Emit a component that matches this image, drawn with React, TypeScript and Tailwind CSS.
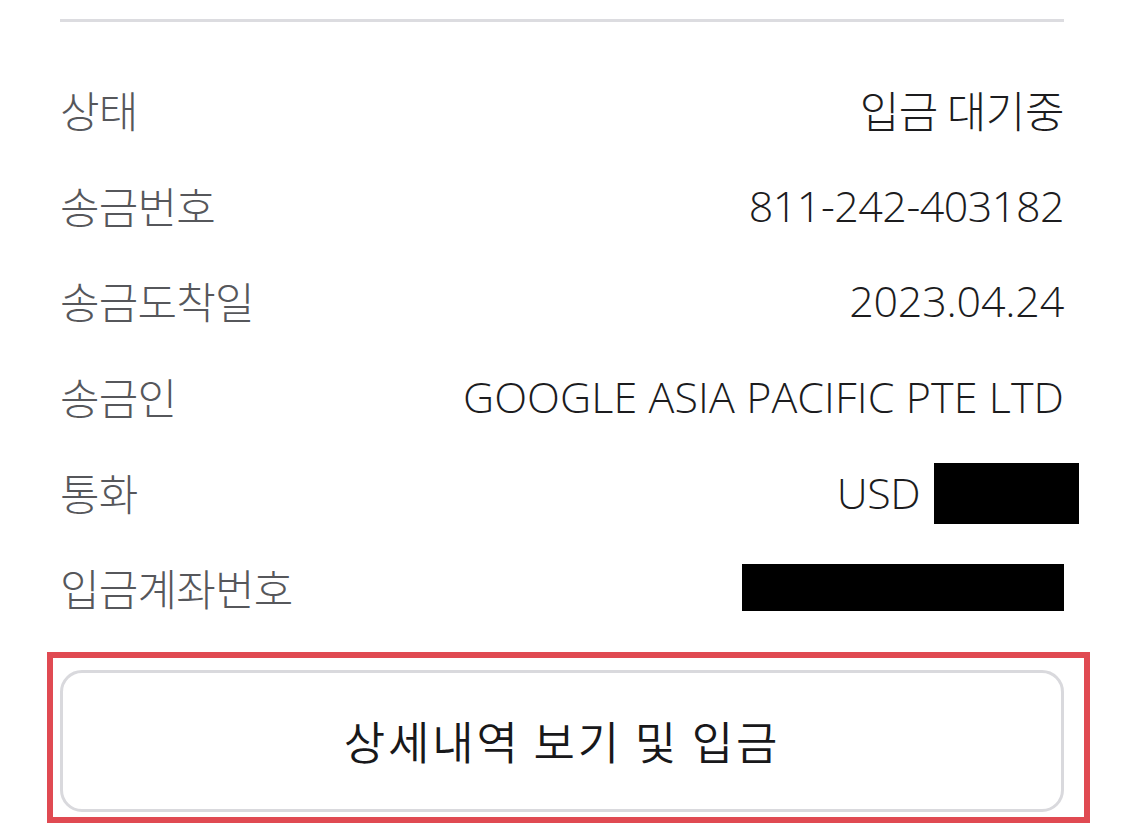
import React from "react";

const font = { fontFamily: '"Open Sans", "Noto Sans CJK KR", "Noto Sans", sans-serif' };
const krFont = { fontFamily: '"Noto Sans CJK KR", "Noto Sans", sans-serif' };

function Row({ label, children }: { label: string; children: React.ReactNode }) {
  return (
    <div className="flex h-[95.6px] items-center justify-between">
      <span className="text-[43px] font-light leading-none tracking-[-0.8px] text-[#56575b]" style={krFont}>
        {label}
      </span>
      <div className="flex items-center text-[43px] font-[350] leading-none text-[#1c1c1e]">{children}</div>
    </div>
  );
}

export default function App() {
  return (
    <div className="h-[831px] w-[1124px] overflow-hidden bg-white px-[60px]" style={font}>
      <div className="mt-[19px] h-[3px] w-full bg-[#dcdce0]" />
      <div className="mt-[40px] flex flex-col">
        <Row label="상태">
          <span className="font-light tracking-[-0.5px]" style={krFont}>입금 대기중</span>
        </Row>
        <Row label="송금번호">
          <span className="tracking-[-0.5px]">811-242-403182</span>
        </Row>
        <Row label="송금도착일">
          <span className="tracking-[-0.2px]">2023.04.24</span>
        </Row>
        <Row label="송금인">
          <span className="tracking-[0.1px]">GOOGLE ASIA PACIFIC PTE LTD</span>
        </Row>
        <Row label="통화">
          <span className="tracking-[-0.5px]">USD</span>
          <span className="ml-[14px] mr-[-15px] mt-[2px] h-[61px] w-[145px] bg-black" />
        </Row>
        <Row label="입금계좌번호">
          <span className="h-[47px] w-[322px] bg-black" />
        </Row>
      </div>
      <div className="ml-[-13px] mr-[-26px] mt-[16px] h-[171px] border-[6px] border-[#e04a52] pb-[5px] pl-[7px] pr-[20px] pt-[12px]">
        <button
          className="flex h-[142px] w-full items-center justify-center rounded-[22px] border-[3px] border-[#d9d9dd] bg-white text-[45px] font-[350] tracking-[2.8px] text-[#18181a]"
          style={krFont}
        >
          상세내역 보기 및 입금
        </button>
      </div>
    </div>
  );
}
